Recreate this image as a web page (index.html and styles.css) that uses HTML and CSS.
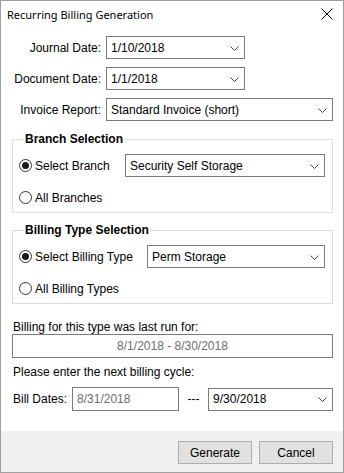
FILE: index.html
```html
<!DOCTYPE html>
<html lang="en">
<head>
  <meta charset="UTF-8">
  <title>Recurring Billing Generation</title>
  <link rel="stylesheet" href="styles.css">
</head>
<body>
<div class="dialog">
  <div class="titlebar">
    <span class="title">Recurring Billing Generation</span>
    <svg class="close" width="12" height="12" viewBox="0 0 12 12"><path d="M0.5 0.5L11.5 11.5M11.5 0.5L0.5 11.5" stroke="#000" stroke-width="1"/></svg>
  </div>

  <div class="content">
    <div class="field">
      <label class="lbl">Journal Date:</label>
      <div class="combo w-date"><span>1/10/2018</span><svg class="chev" width="9" height="5" viewBox="0 0 9 5"><polyline points="0.5,0.5 4.5,4.5 8.5,0.5" fill="none" stroke="#444"/></svg></div>
    </div>
    <div class="field">
      <label class="lbl">Document Date:</label>
      <div class="combo w-date"><span>1/1/2018</span><svg class="chev" width="9" height="5" viewBox="0 0 9 5"><polyline points="0.5,0.5 4.5,4.5 8.5,0.5" fill="none" stroke="#444"/></svg></div>
    </div>
    <div class="field">
      <label class="lbl">Invoice Report:</label>
      <div class="combo grow"><span>Standard Invoice (short)</span><svg class="chev" width="9" height="5" viewBox="0 0 9 5"><polyline points="0.5,0.5 4.5,4.5 8.5,0.5" fill="none" stroke="#444"/></svg></div>
    </div>

    <fieldset class="group">
      <legend>Branch Selection</legend>
      <div class="opt">
        <label class="radio branch"><span class="dot on"></span>Select Branch</label>
        <div class="combo grow"><span>Security Self Storage</span><svg class="chev" width="9" height="5" viewBox="0 0 9 5"><polyline points="0.5,0.5 4.5,4.5 8.5,0.5" fill="none" stroke="#444"/></svg></div>
      </div>
      <div class="opt">
        <label class="radio"><span class="dot"></span>All Branches</label>
      </div>
    </fieldset>

    <fieldset class="group">
      <legend>Billing Type Selection</legend>
      <div class="opt">
        <label class="radio btype"><span class="dot on"></span>Select Billing Type</label>
        <div class="combo grow"><span>Perm Storage</span><svg class="chev" width="9" height="5" viewBox="0 0 9 5"><polyline points="0.5,0.5 4.5,4.5 8.5,0.5" fill="none" stroke="#444"/></svg></div>
      </div>
      <div class="opt">
        <label class="radio"><span class="dot"></span>All Billing Types</label>
      </div>
    </fieldset>

    <p class="note">Billing for this type was last run for:</p>
    <div class="textbox center disabled">8/1/2018 - 8/30/2018</div>

    <p class="note second">Please enter the next billing cycle:</p>
    <div class="dates">
      <label>Bill Dates:</label>
      <div class="textbox from disabled">8/31/2018</div>
      <span class="dash">---</span>
      <div class="combo grow"><span>9/30/2018</span><svg class="chev" width="9" height="5" viewBox="0 0 9 5"><polyline points="0.5,0.5 4.5,4.5 8.5,0.5" fill="none" stroke="#444"/></svg></div>
    </div>
  </div>

  <div class="footer">
    <button>Generate</button>
    <button>Cancel</button>
  </div>
</div>
</body>
</html>
```

FILE: styles.css
```css
body{
  margin:0;
  background:#fff;
  font-family:"Liberation Sans", Arial, sans-serif;
  font-size:12px;
  color:#000;
}
.dialog{
  width:344px;
  height:473px;
  box-sizing:border-box;
  border:1px solid #a0a0a0;
  display:flex;
  flex-direction:column;
  background:#fff;
}
.titlebar{
  height:29px;
  display:flex;
  align-items:center;
  justify-content:space-between;
  padding:0 10px 0 6px;
}
.title{
  font-family:"Noto Sans", sans-serif;
  font-size:11px;
  margin-top:-2px;
}
.close{
  margin-top:-3px;
}
.content{
  flex:1;
  padding:6px 10px 0 11px;
}
.field{
  display:flex;
  align-items:center;
  margin-bottom:8px;
}
.lbl{
  width:89px;
  text-align:right;
  margin-right:5px;
}
.combo{
  height:23px;
  box-sizing:border-box;
  border:1px solid #7a7a7a;
  display:flex;
  align-items:center;
  justify-content:space-between;
  padding:0 5px 0 4px;
  background:#fff;
}
.chev{
  margin-top:1px;
}
.w-date{
  width:139px;
}
.grow{
  flex:1;
}
.group{
  margin:11px 0 0 0;
  padding:8px 7px 3px 6px;
  border:1px solid #dcdcdc;
}
.group + .group{
  margin-top:10px;
}
.group legend{
  font-weight:bold;
  padding:0 1px;
  margin-left:5px;
}
.opt{
  display:flex;
  align-items:center;
  min-height:23px;
}
.opt + .opt{
  margin-top:9px;
}
.radio{
  display:flex;
  align-items:center;
}
.branch{
  width:106px;
}
.btype{
  width:128px;
}
.dot{
  width:13px;
  height:13px;
  box-sizing:border-box;
  border:1px solid #333;
  border-radius:50%;
  margin-right:3px;
  display:flex;
  align-items:center;
  justify-content:center;
}
.dot.on::after{
  content:"";
  width:7px;
  height:7px;
  border-radius:50%;
  background:#1a1a1a;
}
.note{
  margin:16px 0 0 1px;
}
.note.second{
  margin:7px 0 8px 1px;
}
.textbox{
  height:24px;
  box-sizing:border-box;
  border:1px solid #7a7a7a;
  display:flex;
  align-items:center;
  padding:0 4px;
}
.disabled{
  color:#6d6d6d;
}
.center{
  justify-content:center;
}
.dates{
  display:flex;
  align-items:center;
}
.dates label{
  margin-right:5px;
  margin-left:1px;
}
.from{
  width:107px;
}
.dash{
  width:29px;
  text-align:center;
}
.footer{
  height:41px;
  box-sizing:border-box;
  background:#f0f0f0;
  display:flex;
  justify-content:flex-end;
  align-items:flex-start;
  gap:7px;
  padding:10px 10px 0 0;
}
button{
  width:74px;
  height:23px;
  font-family:"Liberation Sans", Arial, sans-serif;
  font-size:12px;
  color:#000;
  background:#e1e1e1;
  border:1px solid #adadad;
  padding:0;
}
```
